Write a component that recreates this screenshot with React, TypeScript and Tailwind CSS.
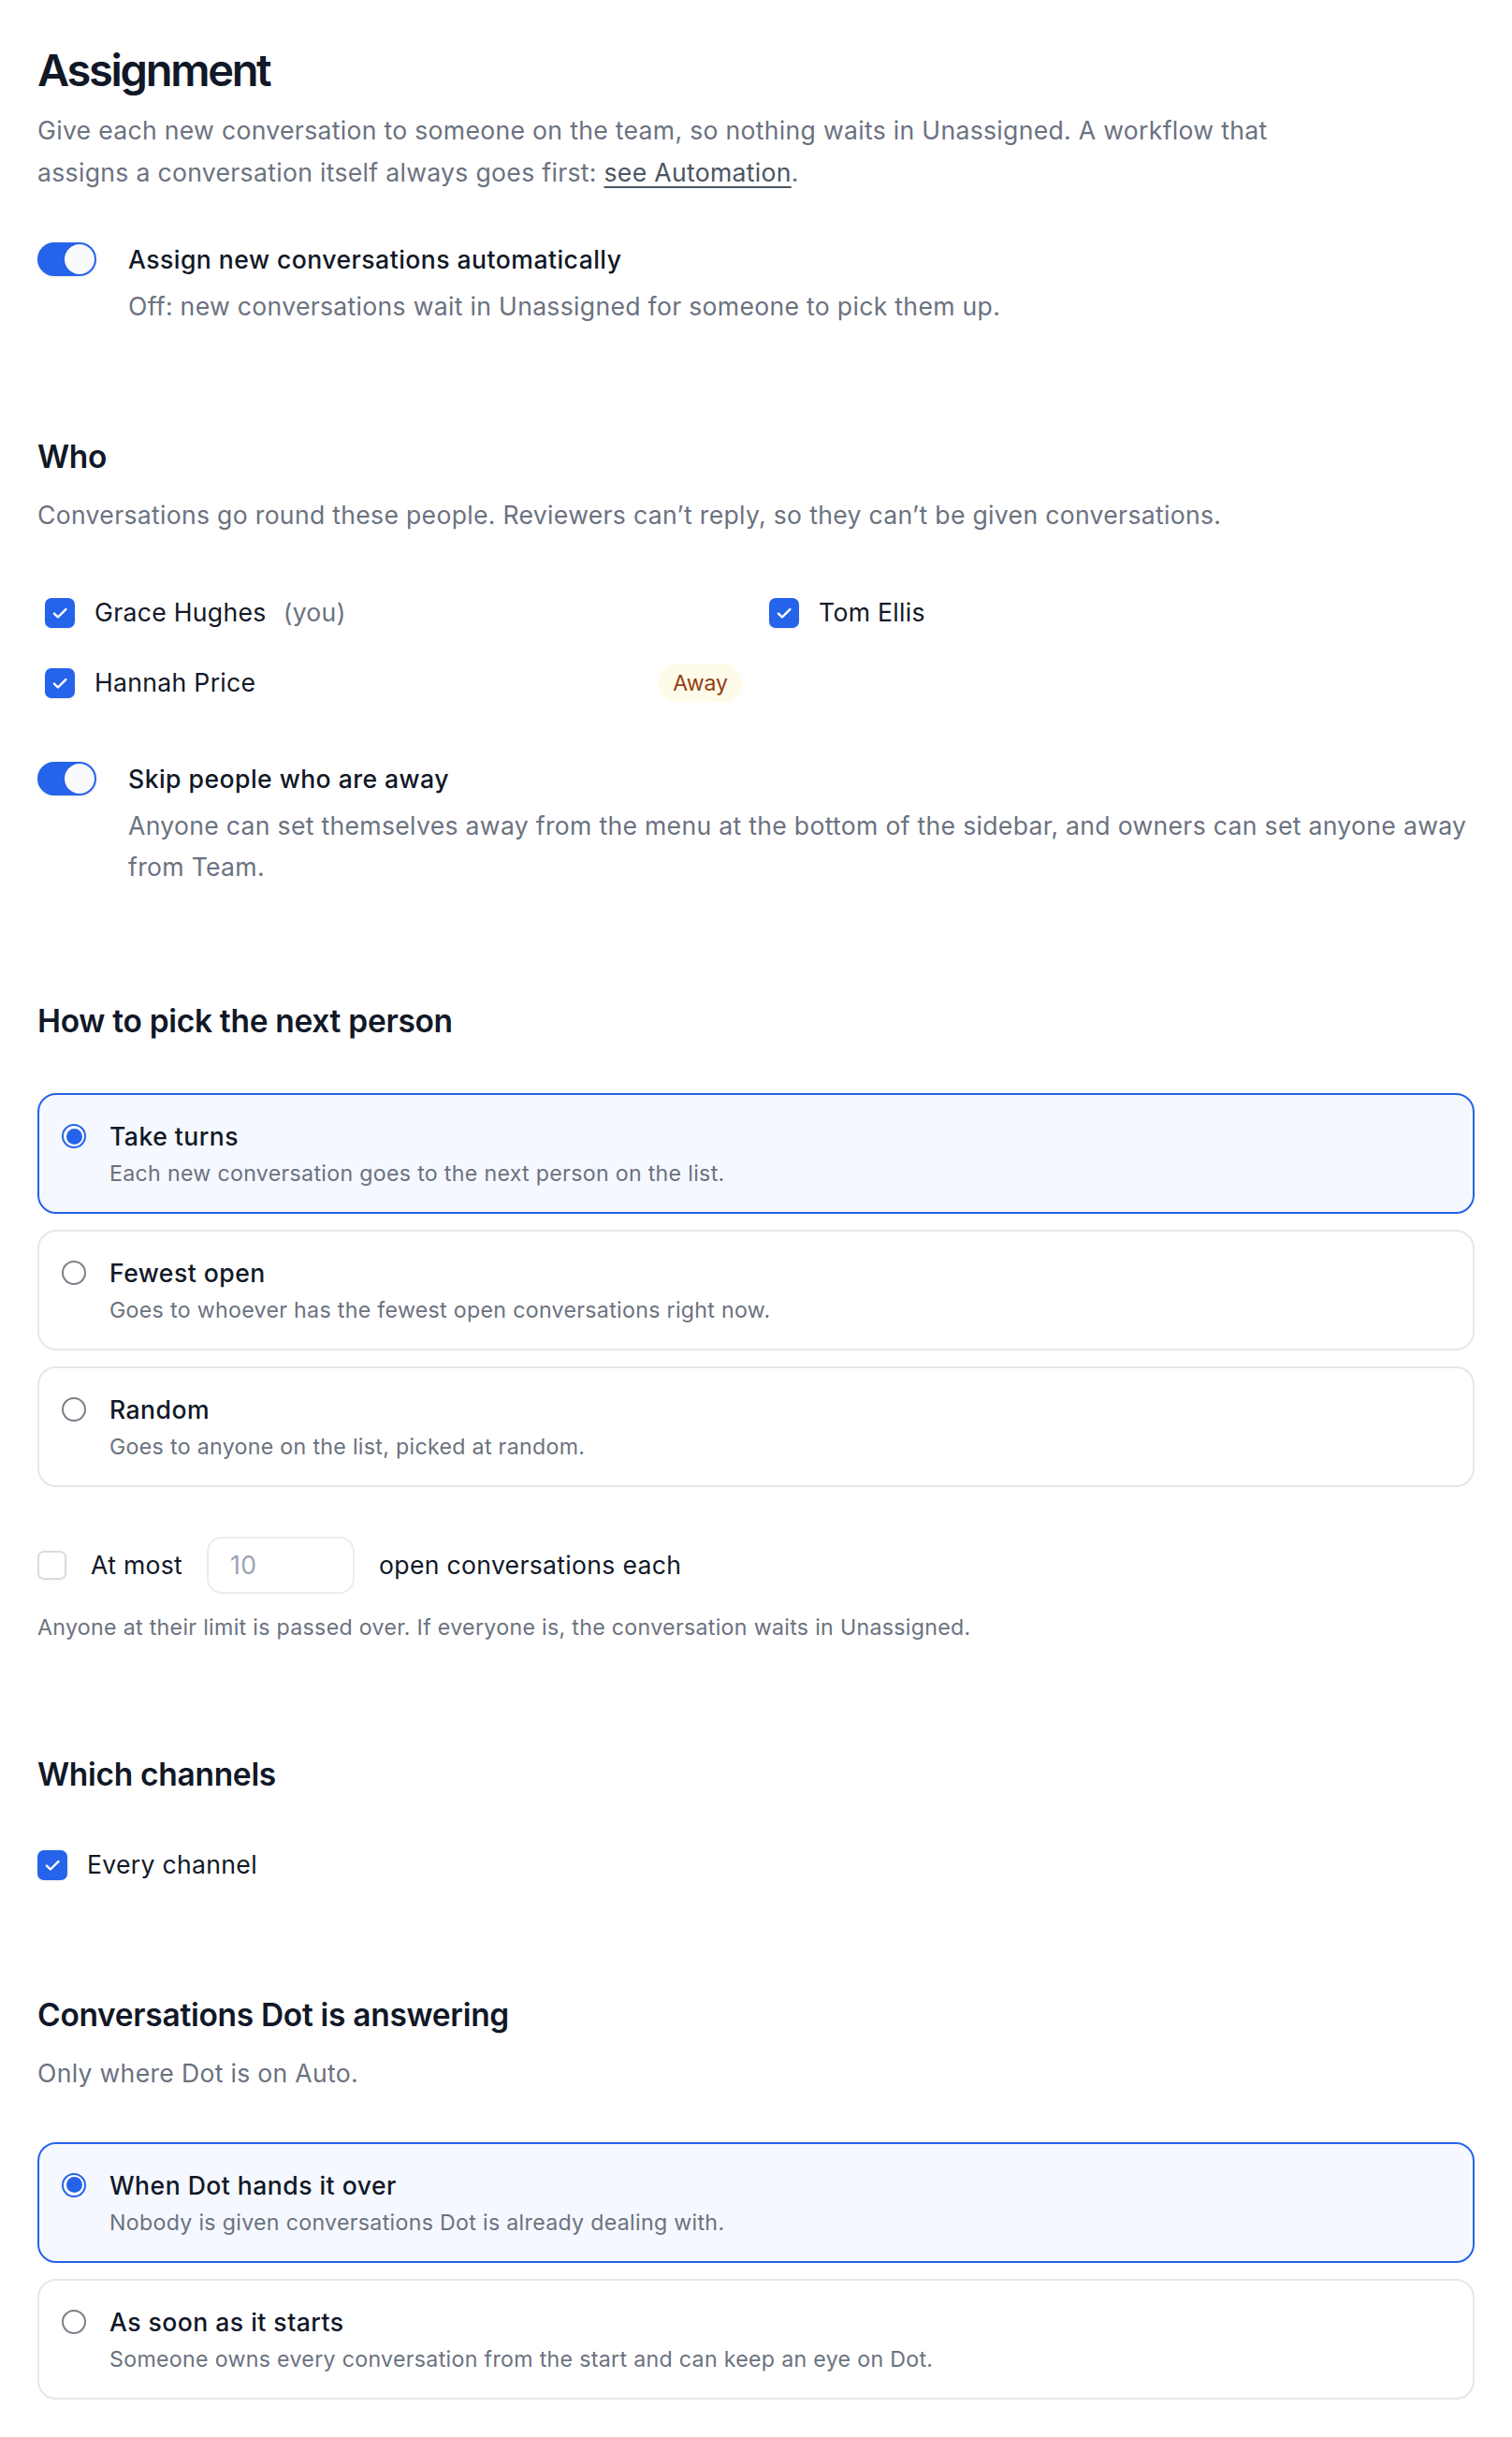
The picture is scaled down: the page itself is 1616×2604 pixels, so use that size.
import React from "react";

function Check() {
  return (
    <svg viewBox="0 0 20 20" className="w-[22px] h-[22px]" fill="none">
      <path d="M4.5 10.5l3.6 3.6L15.8 6.4" stroke="white" strokeWidth="2.2" strokeLinecap="round" strokeLinejoin="round" />
    </svg>
  );
}

function CheckBox({ checked }: { checked: boolean }) {
  return checked ? (
    <span className="flex w-[32px] h-[32px] shrink-0 items-center justify-center rounded-[7px] bg-[#2563eb] shadow-[0_1px_2px_rgba(0,0,0,0.08)]">
      <Check />
    </span>
  ) : (
    <span className="block w-[31px] h-[31px] shrink-0 rounded-[7px] border-[2px] border-[#d8dbe1] bg-white shadow-[0_1px_2px_rgba(0,0,0,0.05)]" />
  );
}

function Toggle() {
  return (
    <span className="mt-[2px] flex w-[63px] h-[36px] shrink-0 items-center justify-end rounded-full bg-[#2563eb] p-[2px] shadow-[0_1px_3px_rgba(0,0,0,0.1)]">
      <span className="block w-[32px] h-[32px] rounded-full bg-[#f8fafc]" />
    </span>
  );
}

function Radio({ checked }: { checked: boolean }) {
  return checked ? (
    <span className="mt-[7px] flex w-[26px] h-[26px] shrink-0 items-center justify-center rounded-full border-[2px] border-[#2563eb] bg-white">
      <span className="block w-[17px] h-[17px] rounded-full bg-[#2563eb]" />
    </span>
  ) : (
    <span className="mt-[7px] block w-[26px] h-[26px] shrink-0 rounded-full border-[2px] border-[#7a7f87] bg-white" />
  );
}

function ToggleRow({ title, desc, className }: { title: string; desc: string; className: string }) {
  return (
    <div className={"flex items-start gap-[34px] " + className}>
      <Toggle />
      <div>
        <div className="text-[26.6px] leading-[40px] font-medium tracking-[0.45px] text-[#111827]">{title}</div>
        <p className="mt-[8px] text-[26.6px] leading-[44px] tracking-[0.3px] text-[#6b7280]">{desc}</p>
      </div>
    </div>
  );
}

function OptionCard({ title, desc, selected }: { title: string; desc: string; selected: boolean }) {
  return (
    <div
      className={
        selected
          ? "flex items-start gap-[25px] rounded-[20px] border-[2px] border-[#2563eb] bg-[#f5f8fe] p-[24px]"
          : "flex items-start gap-[25px] rounded-[20px] border-[2px] border-[#e5e7eb] bg-white p-[24px]"
      }
    >
      <Radio checked={selected} />
      <div>
        <div className="text-[26.6px] leading-[40px] font-medium tracking-[0.45px] text-[#111827]">{title}</div>
        <div className="mt-[4px] text-[23.2px] leading-[33px] tracking-[0.3px] text-[#6b7280]">{desc}</div>
      </div>
    </div>
  );
}

function Heading({ children }: { children: React.ReactNode }) {
  return (
    <h2 className="text-[33.5px] leading-[46.5px] font-semibold tracking-[-0.3px] text-[#111827]">{children}</h2>
  );
}

const body = "text-[26.6px] tracking-[0.3px]";

export default function App() {
  return (
    <div className="min-h-screen bg-white [font-family:Inter,sans-serif] text-[#111827]">
      <div className="px-[40px] pt-[47px] pb-[37px]">
        <h1 className="text-[47px] leading-[56px] font-semibold tracking-[-2.3px] text-[#111827]">Assignment</h1>
        <p className={"mt-[14px] max-w-[1360px] leading-[45px] text-[#6b7280] " + body}>
          Give each new conversation to someone on the team, so nothing waits in Unassigned. A workflow that assigns a
          conversation itself always goes first:{" "}
          <a className="text-[#4b5563] underline underline-offset-[5px]">see Automation</a>.
        </p>

        <ToggleRow
          className="mt-[50px]"
          title="Assign new conversations automatically"
          desc="Off: new conversations wait in Unassigned for someone to pick them up."
        />

        <section className="mt-[116px]">
          <Heading>Who</Heading>
          <p className={"mt-[16px] leading-[44px] text-[#6b7280] " + body}>
            Conversations go round these people. Reviewers can’t reply, so they can’t be given conversations.
          </p>
          <div className="mt-[54px] grid grid-cols-2 gap-x-[12px] gap-y-[17.5px]">
            <div className="flex h-[58px] items-center px-[8px]">
              <CheckBox checked />
              <span className={"ml-[21px] text-[#111827] " + body}>Grace Hughes</span>
              <span className={"ml-[18px] text-[#6b7280] " + body}>(you)</span>
            </div>
            <div className="flex h-[58px] items-center px-[8px]">
              <CheckBox checked />
              <span className={"ml-[21px] text-[#111827] " + body}>Tom Ellis</span>
            </div>
            <div className="flex h-[58px] items-center px-[8px]">
              <CheckBox checked />
              <span className={"ml-[21px] text-[#111827] " + body}>Hannah Price</span>
              <span className="ml-auto flex h-[42px] items-center rounded-full bg-[#fefbea] px-[16px] text-[23px] text-[#92400e]">
                Away
              </span>
            </div>
          </div>
          <ToggleRow
            className="mt-[53px]"
            title="Skip people who are away"
            desc="Anyone can set themselves away from the menu at the bottom of the sidebar, and owners can set anyone away from Team."
          />
        </section>

        <section className="mt-[119.5px]">
          <Heading>How to pick the next person</Heading>
          <div className="mt-[54px] flex flex-col gap-[17px]">
            <OptionCard selected title="Take turns" desc="Each new conversation goes to the next person on the list." />
            <OptionCard
              selected={false}
              title="Fewest open"
              desc="Goes to whoever has the fewest open conversations right now."
            />
            <OptionCard selected={false} title="Random" desc="Goes to anyone on the list, picked at random." />
          </div>
          <div className="mt-[53px] flex items-center gap-[26px]">
            <CheckBox checked={false} />
            <span className={"text-[#111827] " + body}>At most</span>
            <div className={"flex h-[61px] w-[158px] items-center rounded-[16px] border-[2px] border-[#ebecef] px-[23px] text-[#9ca3af] " + body}>
              10
            </div>
            <span className={"text-[#111827] " + body}>open conversations each</span>
          </div>
          <p className="mt-[20px] text-[23.2px] leading-[33px] tracking-[0.3px] text-[#6b7280]">
            Anyone at their limit is passed over. If everyone is, the conversation waits in Unassigned.
          </p>
        </section>

        <section className="mt-[117px]">
          <Heading>Which channels</Heading>
          <div className="mt-[53.5px] flex h-[40px] items-center">
            <CheckBox checked />
            <span className={"ml-[21px] text-[#111827] " + body}>Every channel</span>
          </div>
        </section>

        <section className="mt-[116.5px]">
          <Heading>Conversations Dot is answering</Heading>
          <p className={"mt-[16.5px] leading-[44px] text-[#6b7280] " + body}>Only where Dot is on Auto.</p>
          <div className="mt-[52px] flex flex-col gap-[17px]">
            <OptionCard selected title="When Dot hands it over" desc="Nobody is given conversations Dot is already dealing with." />
            <OptionCard
              selected={false}
              title="As soon as it starts"
              desc="Someone owns every conversation from the start and can keep an eye on Dot."
            />
          </div>
        </section>
      </div>
    </div>
  );
}
